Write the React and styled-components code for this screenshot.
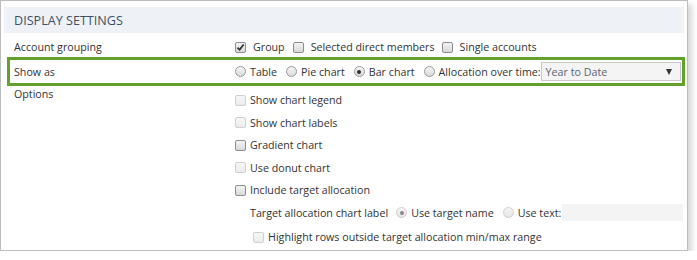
import React from 'react';
import styled, { createGlobalStyle } from 'styled-components';

const GlobalStyle = createGlobalStyle`
  html, body {
    margin: 0;
    padding: 0;
    background: #ffffff;
  }
  body {
    font-family: 'Open Sans', 'Noto Sans', sans-serif;
    font-size: 10.7px;
    color: #333333;
  }
`;

const CheckMark = () => (
  <svg width="9" height="9" viewBox="0 0 9 9">
    <path d="M1.5 4.6 L3.6 6.8 L7.6 1.6" fill="none" stroke="#2b2b2b" strokeWidth="1.7" />
  </svg>
);

const App = () => (
  <>
    <GlobalStyle />
    <Panel>
      <Header>Display Settings</Header>

      <Row $height={24} $top={4}>
        <Label>Account grouping</Label>
        <Controls>
          <Choice $gap={7} $space={8}>
            <Box $checked>
              <CheckMark />
            </Box>
            Group
          </Choice>
          <Choice $gap={7} $space={7}>
            <Box />
            Selected direct members
          </Choice>
          <Choice $gap={7}>
            <Box />
            Single accounts
          </Choice>
        </Controls>
      </Row>

      <HighlightRow>
        <Label>Show as</Label>
        <Controls>
          <Choice $gap={4} $space={9}>
            <Radio />
            Table
          </Choice>
          <Choice $gap={4} $space={9}>
            <Radio />
            Pie chart
          </Choice>
          <Choice $gap={4} $space={9}>
            <Radio $checked />
            Bar chart
          </Choice>
          <Choice $gap={4} $space={0}>
            <Radio />
            Allocation over time:
          </Choice>
          <Select>
            <span>Year to Date</span>
            <Arrow />
          </Select>
        </Controls>
      </HighlightRow>

      <OptionsRow>
        <Label>Options</Label>
        <OptionList>
          <Item>
            <Choice $gap={4}>
              <Box $disabled />
              Show chart legend
            </Choice>
          </Item>
          <Item>
            <Choice $gap={4}>
              <Box $disabled />
              Show chart labels
            </Choice>
          </Item>
          <Item>
            <Choice $gap={4}>
              <Box />
              Gradient chart
            </Choice>
          </Item>
          <Item>
            <Choice $gap={4}>
              <Box $disabled />
              Use donut chart
            </Choice>
          </Item>
          <Item>
            <Choice $gap={4}>
              <Box />
              Include target allocation
            </Choice>
          </Item>
          <Item $indent={15}>
            <Choice $space={8}>Target allocation chart label</Choice>
            <Choice $gap={4} $space={9}>
              <Radio $checked $disabled />
              Use target name
            </Choice>
            <Choice $gap={4} $space={1}>
              <Radio $disabled />
              Use text:
            </Choice>
            <TextInput />
          </Item>
          <Item $indent={18} $top={2}>
            <Choice $gap={4}>
              <Box $disabled />
              Highlight rows outside target allocation min/max range
            </Choice>
          </Item>
        </OptionList>
      </OptionsRow>
    </Panel>
  </>
);

export default App;

const Panel = styled.div`
  box-sizing: border-box;
  width: 688px;
  height: 251px;
  padding: 6px 3px 0 3px;
  border: 1px solid #bdbdbd;
  background: #ffffff;
  box-shadow: 4px 4px 6px rgba(0, 0, 0, 0.16);
`;

const Header = styled.div`
  display: flex;
  align-items: center;
  height: 26px;
  padding-left: 10px;
  background: #eef2f6;
  color: #3d4f63;
  font-size: 12.6px;
  text-transform: uppercase;
`;

const Row = styled.div`
  box-sizing: border-box;
  display: flex;
  align-items: center;
  height: ${p => p.$height}px;
  padding: ${p => p.$top || 0}px 0 0 10px;
`;

const HighlightRow = styled.div`
  box-sizing: border-box;
  display: flex;
  align-items: center;
  height: 29px;
  margin: 0 -1px 0 3px;
  padding-left: 4px;
  border: 3px solid #62a22a;
`;

const OptionsRow = styled.div`
  display: flex;
  align-items: flex-start;
  padding-left: 10px;
`;

const Label = styled.div`
  flex: none;
  width: 221px;
  line-height: 16px;
`;

const Controls = styled.div`
  display: flex;
  align-items: center;
  flex: 1;
  min-width: 0;
`;

const OptionList = styled.div`
  display: flex;
  flex-direction: column;
  padding-top: 3px;
`;

const Item = styled.div`
  display: flex;
  align-items: center;
  height: 22.5px;
  padding-left: ${p => p.$indent || 0}px;
  margin-top: ${p => p.$top || 0}px;
`;

const Choice = styled.label`
  display: inline-flex;
  align-items: center;
  flex: none;
  gap: ${p => p.$gap || 0}px;
  margin-right: ${p => p.$space || 0}px;
  white-space: nowrap;
`;

const Box = styled.span`
  box-sizing: border-box;
  display: inline-flex;
  align-items: center;
  justify-content: center;
  width: 11px;
  height: 11px;
  border-radius: 2px;
  border: 1px solid ${p => (p.$disabled ? '#d0d0d0' : '#8e8e8e')};
  background: ${p =>
    p.$disabled
      ? 'linear-gradient(#f7f7f7, #ececec)'
      : 'linear-gradient(#f4f4f4, #d8d8d8)'};
`;

const Radio = styled.span`
  box-sizing: border-box;
  position: relative;
  display: inline-block;
  width: 11px;
  height: 11px;
  border-radius: 50%;
  border: 1px solid ${p => (p.$disabled ? '#cfcfcf' : '#9a9a9a')};
  background: ${p =>
    p.$disabled
      ? 'linear-gradient(#f6f6f6, #e6e6e6)'
      : 'linear-gradient(#f6f6f6, #d9d9d9)'};

  &::after {
    content: '';
    display: ${p => (p.$checked ? 'block' : 'none')};
    position: absolute;
    left: 2.5px;
    top: 2.5px;
    width: 4px;
    height: 4px;
    border-radius: 50%;
    background: ${p => (p.$disabled ? '#8a8a8a' : '#2e2e2e')};
  }
`;

const Select = styled.div`
  box-sizing: border-box;
  display: flex;
  flex: none;
  align-items: center;
  justify-content: space-between;
  width: 140px;
  height: 19px;
  padding: 0 8px 0 4px;
  border: 1px solid #c8c8c8;
  background: #f4f4f4;
  color: #5a6270;
`;

const Arrow = styled.span`
  width: 0;
  height: 0;
  border-left: 3.5px solid transparent;
  border-right: 3.5px solid transparent;
  border-top: 6px solid #333333;
`;

const TextInput = styled.div`
  flex: none;
  width: 121px;
  height: 17px;
  background: #f4f4f4;
`;
